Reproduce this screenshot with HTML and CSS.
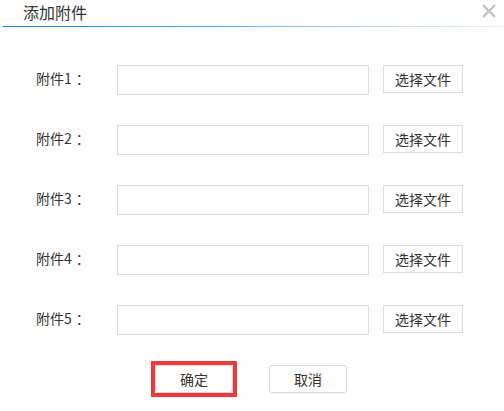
FILE: index.html
```html
<!DOCTYPE html>
<html lang="zh-CN">
<head>
<meta charset="utf-8">
<title>添加附件</title>
<link rel="stylesheet" href="styles.css">
</head>
<body>
<div class="dialog">
  <div class="header">
    <span class="title">添加附件</span>
    <span class="close" aria-label="关闭">
      <svg width="14" height="14" viewBox="0 0 14 14"><path d="M1 1 L13 13 M13 1 L1 13" stroke="#c2c2c2" stroke-width="2.4" fill="none"/></svg>
    </span>
  </div>
  <div class="rule"></div>
  <div class="form">
    <div class="row"><label class="label">附件1<span class="colon">：</span></label><div class="input"></div><button class="pick">选择文件</button></div>
    <div class="row"><label class="label">附件2<span class="colon">：</span></label><div class="input"></div><button class="pick">选择文件</button></div>
    <div class="row"><label class="label">附件3<span class="colon">：</span></label><div class="input"></div><button class="pick">选择文件</button></div>
    <div class="row"><label class="label">附件4<span class="colon">：</span></label><div class="input"></div><button class="pick">选择文件</button></div>
    <div class="row"><label class="label">附件5<span class="colon">：</span></label><div class="input"></div><button class="pick">选择文件</button></div>
  </div>
  <div class="footer">
    <span class="focus-ring"><button class="btn">确定</button></span>
    <button class="btn">取消</button>
  </div>
</div>
</body>
</html>
```
FILE: styles.css
```css
html, body {
  margin: 0;
  padding: 0;
  background: #fff;
}
body {
  font-family: "Noto Sans CJK SC", "Noto Sans", sans-serif;
  color: #333;
  width: 504px;
  height: 411px;
  overflow: hidden;
}
.header {
  height: 26px;
  display: flex;
  align-items: flex-start;
  justify-content: space-between;
}
.title {
  font-size: 16px;
  line-height: 24px;
  margin-left: 23px;
  color: #333;
}
.close {
  margin-top: 4px;
  margin-right: 8px;
  width: 14px;
  height: 14px;
  display: block;
}
.close svg { display: block; }
.rule {
  height: 1px;
  margin-left: 3px;
  background: linear-gradient(to right, #1a80ee 0%, #5aa6f2 40%, #b8d6f6 75%, #eef4fb 100%);
}
.form {
  padding: 38px 0 0 36px;
  display: flex;
  flex-direction: column;
  gap: 30px;
}
.row {
  display: flex;
  align-items: flex-start;
  height: 30px;
}
.label {
  width: 81px;
  font-size: 14px;
  line-height: 26px;
  color: #333;
}
.colon {
  margin-left: 4px;
}
.input {
  box-sizing: border-box;
  width: 252px;
  height: 30px;
  border: 1px solid #dcdcdc;
  background: #fff;
}
.pick {
  box-sizing: border-box;
  margin-left: 14px;
  height: 28px;
  width: 80px;
  border: 1px solid #dcdcdc;
  background: #fff;
  font-family: inherit;
  font-size: 14px;
  color: #333;
  padding: 0;
  line-height: 26px;
}
.footer {
  margin-top: 26px;
  display: flex;
  align-items: center;
  justify-content: center;
  gap: 32px;
  padding-right: 6px;
}
.focus-ring {
  display: block;
  border: 4px solid #ee3a3a;
}
.focus-ring .btn { display: block; }
.btn {
  box-sizing: border-box;
  width: 78px;
  height: 28px;
  border: 1px solid #d6d6d6;
  border-radius: 3px;
  background: #fff;
  font-family: inherit;
  font-size: 14px;
  color: #333;
  padding: 0;
  line-height: 26px;
}
```
